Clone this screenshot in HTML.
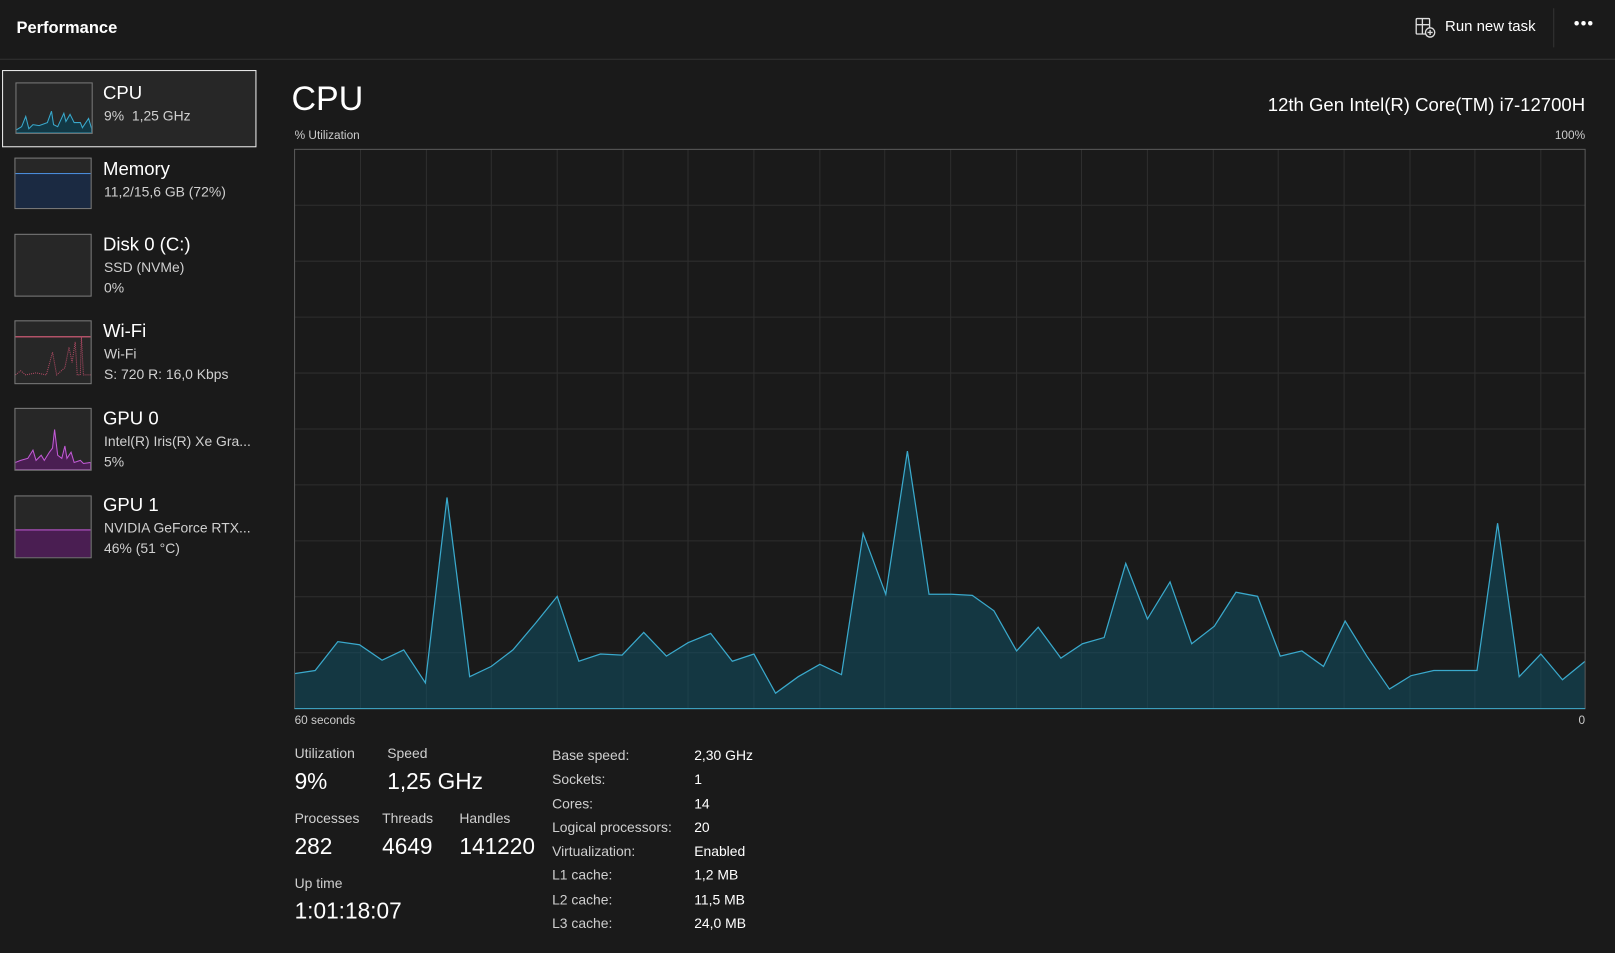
<!DOCTYPE html>
<html><head><meta charset="utf-8"><style>
html,body{margin:0;padding:0;background:#1a1a1a;overflow:hidden;width:1615px;height:953px}
#w{position:absolute;left:0;top:0;width:1568px;height:925px;transform:scale(1.02997);transform-origin:0 0;font-family:"Segoe UI","Liberation Sans",sans-serif;color:#fff}
.a{position:absolute;white-space:nowrap}
.t{position:absolute;border:1px solid #7a7a7a;background:#272727;overflow:hidden}
.sb1{font-size:18px}.sb2{font-size:13.5px;color:#d0d0d0}
.l{font-size:13.5px;color:#cfcfcf}.v{font-size:22px}
</style></head><body><div id="w">
<div class="a" style="left:16px;top:19px;font-size:16px;font-weight:bold">Performance</div>
<div class="a" style="left:0;top:57px;width:1568px;height:1px;background:#333"></div>
<svg class="a" style="left:1374px;top:17px" width="20" height="20" viewBox="0 0 20 20" fill="none" stroke="#ddd" stroke-width="1.3"><rect x="1" y="1" width="13" height="15" rx="1"/><line x1="1" y1="7" x2="14" y2="7"/><line x1="7" y1="1" x2="7" y2="16"/><circle cx="14.5" cy="14.5" r="4.5" fill="#1a1a1a"/><line x1="14.5" y1="12" x2="14.5" y2="17"/><line x1="12" y1="14.5" x2="17" y2="14.5"/></svg>
<div class="a" style="left:1403px;top:18px;font-size:14.5px">Run new task</div>
<div class="a" style="left:1508px;top:8px;width:1px;height:38px;background:#333"></div>
<div class="a" style="left:1528px;top:15px;font-size:16px;letter-spacing:1px">•••</div>

<div class="a" style="left:2px;top:68px;width:245px;height:73px;border:1px solid #eee;background:#272727"></div>
<div class="t" style="left:15px;top:80px;width:73px;height:48px"><svg width="73" height="48"><polyline points="0,45 5,42 9,32 12,44 16,40 22,41 30,38 34,27 36,40 40,42 46,29 48,37 52,30 56,38 62,38 64,43 70,34 73,44 73,48 0,48" fill="#123845" stroke="#3aa9cc" stroke-width="1"/></svg></div>
<div class="a sb1" style="left:100px;top:80px">CPU</div><div class="a sb2" style="left:101px;top:105px">9%&nbsp; 1,25 GHz</div>
<div class="t" style="left:14px;top:153px;width:73px;height:48px"><div style="position:absolute;left:0;top:14px;width:73px;height:34px;background:#1b2a42;border-top:1px solid #4d8fdd"></div></div>
<div class="a sb1" style="left:100px;top:154px">Memory</div><div class="a sb2" style="left:101px;top:179px">11,2/15,6 GB (72%)</div>
<div class="t" style="left:14px;top:227px;width:73px;height:59px"></div>
<div class="a sb1" style="left:100px;top:227px">Disk 0 (C:)</div><div class="a sb2" style="left:101px;top:252px">SSD (NVMe)</div><div class="a sb2" style="left:101px;top:272px">0%</div>
<div class="t" style="left:14px;top:311px;width:73px;height:60px"><svg width="73" height="60"><line x1="0" y1="15" x2="73" y2="15" stroke="#e0607e"/><polyline points="0,52 5,48 10,52 20,50 30,52 36,30 40,52 48,45 52,25 55,40 58,20 60,52 63,52 64,15 66,52 73,52" fill="none" stroke="#b04a64" stroke-dasharray="1,1"/></svg></div>
<div class="a sb1" style="left:100px;top:311px">Wi-Fi</div><div class="a sb2" style="left:101px;top:336px">Wi-Fi</div><div class="a sb2" style="left:101px;top:356px">S: 720 R: 16,0 Kbps</div>
<div class="t" style="left:14px;top:396px;width:73px;height:59px"><svg width="73" height="59"><polyline points="0,52 5,50 12,48 17,40 20,50 25,45 28,50 33,42 36,38 38,20 41,45 45,48 48,36 50,48 54,42 57,52 63,50 66,53 73,52 73,59 0,59" fill="#4a1e52" stroke="#c25bd6" stroke-width="1"/></svg></div>
<div class="a sb1" style="left:100px;top:396px">GPU 0</div><div class="a sb2" style="left:101px;top:421px">Intel(R) Iris(R) Xe Gra...</div><div class="a sb2" style="left:101px;top:441px">5%</div>
<div class="t" style="left:14px;top:481px;width:73px;height:59px"><div style="position:absolute;left:0;top:32px;width:73px;height:27px;background:#4a1e52;border-top:1px solid #c25bd6"></div></div>
<div class="a sb1" style="left:100px;top:480px">GPU 1</div><div class="a sb2" style="left:101px;top:505px">NVIDIA GeForce RTX...</div><div class="a sb2" style="left:101px;top:525px">46% (51 °C)</div>

<div class="a" style="left:283px;top:77px;font-size:33px">CPU</div>
<div class="a" style="right:29px;top:92px;font-size:18px">12th Gen Intel(R) Core(TM) i7-12700H</div>
<div class="a" style="left:286px;top:126px;font-size:11.5px;color:#ccc">% Utilization</div>
<div class="a" style="right:29px;top:126px;font-size:11.5px;color:#ccc">100%</div>
<svg class="a" style="left:285px;top:144px" width="1256" height="546" viewBox="285 144 1256 546">
<g stroke="#2e2e2e" stroke-width="1">
<path d="M350 145V688M414 145V688M477 145V688M541 145V688M605 145V688M668 145V688M732 145V688M796 145V688M859 145V688M923 145V688M987 145V688M1050 145V688M1114 145V688M1178 145V688M1241 145V688M1305 145V688M1369 145V688M1432 145V688M1496 145V688"/>
<path d="M286 199.3H1539M286 253.6H1539M286 307.9H1539M286 362.2H1539M286 416.5H1539M286 470.8H1539M286 525.1H1539M286 579.4H1539M286 633.7H1539"/>
</g>
<polygon points="286,654 306,651 328,623 349,626 371,641 392,631 413,663 434,483 456,657 477,647 498,631 520,605 541,579 562,642 583,635 604,636 625,614 647,637 668,624 690,615 711,642 732,635 753,673 775,657 796,645 817,655 838,518 860,577 881,438 902,577 924,577 944,578 965,593 987,632 1008,609 1030,639 1051,625 1072,619 1093,547 1114,601 1136,565 1157,625 1179,608 1200,575 1221,579 1243,637 1264,632 1285,647 1306,603 1327,637 1349,669 1370,656 1392,651 1413,651 1434,651 1454,508 1475,657 1496,635 1517,660 1539,642 1539,688 286,688" fill="rgba(17,80,100,0.55)" stroke="none"/>
<polyline points="286,654 306,651 328,623 349,626 371,641 392,631 413,663 434,483 456,657 477,647 498,631 520,605 541,579 562,642 583,635 604,636 625,614 647,637 668,624 690,615 711,642 732,635 753,673 775,657 796,645 817,655 838,518 860,577 881,438 902,577 924,577 944,578 965,593 987,632 1008,609 1030,639 1051,625 1072,619 1093,547 1114,601 1136,565 1157,625 1179,608 1200,575 1221,579 1243,637 1264,632 1285,647 1306,603 1327,637 1349,669 1370,656 1392,651 1413,651 1434,651 1454,508 1475,657 1496,635 1517,660 1539,642" fill="none" stroke="#3aa9cc" stroke-width="1.2"/>
<rect x="286" y="145" width="1253" height="543" fill="none" stroke="#5a5a5a" stroke-width="1"/>
<line x1="286" y1="688" x2="1539" y2="688" stroke="#3aa9cc"/>
</svg>
<div class="a" style="left:286px;top:694px;font-size:11.5px;color:#ccc">60 seconds</div>
<div class="a" style="right:29px;top:694px;font-size:11.5px;color:#ccc">0</div>

<div class="a l" style="left:286px;top:724px">Utilization</div><div class="a l" style="left:376px;top:724px">Speed</div>
<div class="a v" style="left:286px;top:746px">9%</div><div class="a v" style="left:376px;top:746px">1,25 GHz</div>
<div class="a l" style="left:286px;top:787px">Processes</div><div class="a l" style="left:371px;top:787px">Threads</div><div class="a l" style="left:446px;top:787px">Handles</div>
<div class="a v" style="left:286px;top:809px">282</div><div class="a v" style="left:371px;top:809px">4649</div><div class="a v" style="left:446px;top:809px">141220</div>
<div class="a l" style="left:286px;top:850px">Up time</div>
<div class="a v" style="left:286px;top:872px">1:01:18:07</div>
<div class="a l" style="left:536px;top:722px;line-height:23.3px">Base speed:<br>Sockets:<br>Cores:<br>Logical processors:<br>Virtualization:<br>L1 cache:<br>L2 cache:<br>L3 cache:</div>
<div class="a l" style="left:674px;top:722px;line-height:23.3px;color:#fff">2,30 GHz<br>1<br>14<br>20<br>Enabled<br>1,2 MB<br>11,5 MB<br>24,0 MB</div>
</div></body></html>
